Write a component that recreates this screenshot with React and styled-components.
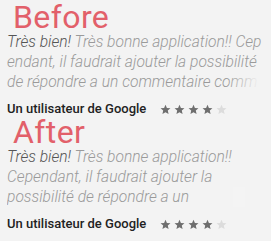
import React from "react";
import styled, { createGlobalStyle } from "styled-components";

const Global = createGlobalStyle`
  html, body { margin: 0; padding: 0; background: #f3f3f3; }
  body { font-family: Roboto, "Noto Sans", sans-serif; }
`;

const Page = styled.div`
  width: 271px;
  height: 241px;
  box-sizing: border-box;
  padding: 3px 6px 0 7px;
  overflow: hidden;
`;

const Section = styled.section`
  display: flex;
  flex-direction: column;
`;

const Title = styled.h1`
  margin: 0 0 0 6px;
  font-family: Roboto, sans-serif;
  font-weight: 400;
  font-size: 32px;
  letter-spacing: 0.4px;
  line-height: 29px;
  color: #e2606a;
`;

const Review = styled.p`
  position: relative;
  margin: 0;
  width: 256px;
  height: 60px;
  overflow: hidden;
  font-family: Roboto, sans-serif;
  font-style: italic;
  font-weight: 300;
  font-size: 15.6px;
  line-height: 20px;
  color: #9a9a9a;
  word-break: ${(p) => (p.$breakAll ? "break-all" : "normal")};
  &::after {
    content: "";
    position: absolute;
    right: ${(p) => (p.$breakAll ? "0" : "18px")};
    bottom: 0;
    width: ${(p) => (p.$breakAll ? "36px" : "12px")};
    height: 20px;
    background: ${(p) =>
      p.$breakAll
        ? "linear-gradient(to right, rgba(243,243,243,0), #f3f3f3 90%)"
        : "#f4f4f4"};
  }
`;

const Lead = styled.span`
  color: #555;
`;

const Footer = styled.div`
  display: flex;
  align-items: center;
  gap: 14px;
  margin-top: 6px;
  height: 20px;
`;

const Author = styled.span`
  font-family: Roboto, sans-serif;
  font-weight: 500;
  font-size: 13px;
  color: #222;
`;

const Stars = styled.div`
  display: flex;
  gap: 3px;
  margin-top: 2px;
`;

const Star = ({ on }) => (
  <svg width="11" height="11" viewBox="0 0 24 24">
    <polygon
      points="12,1.5 15.1,8.6 22.8,9.3 17,14.4 18.7,22 12,18 5.3,22 7,14.4 1.2,9.3 8.9,8.6"
      fill={on ? "#6e6e6e" : "#dcdcdc"}
    />
  </svg>
);

const Block = ({ title, breakAll }) => (
  <Section>
    <Title>{title}</Title>
    <Review $breakAll={breakAll}>
      <Lead>Très bien!</Lead> Très bonne application!! Cependant, il faudrait
      ajouter la possibilité de répondre a un commentaire comme sur le Play Store
    </Review>
    <Footer>
      <Author>Un utilisateur de Google</Author>
      <Stars>
        {[1, 2, 3, 4, 5].map((i) => (
          <Star key={i} on={i <= 4} />
        ))}
      </Stars>
    </Footer>
  </Section>
);

export default function App() {
  return (
    <>
      <Global />
      <Page>
        <Block title="Before" breakAll />
        <Block title="After" />
      </Page>
    </>
  );
}
